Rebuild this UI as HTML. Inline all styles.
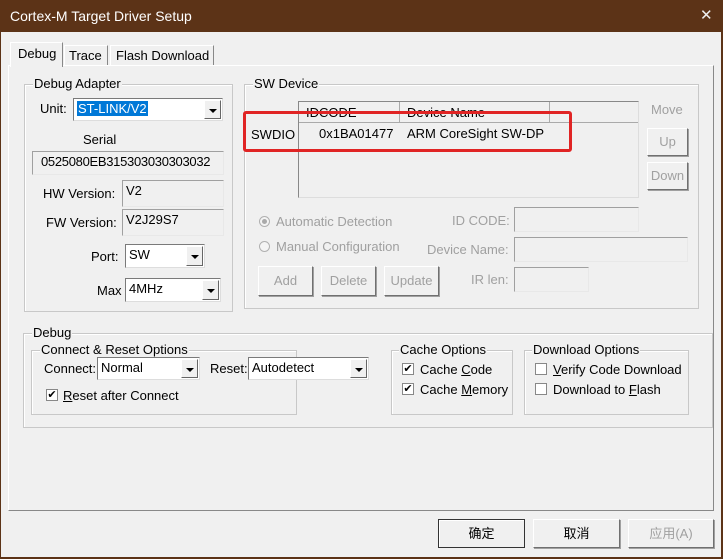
<!DOCTYPE html><html><head><meta charset="utf-8"><style>
*{box-sizing:border-box;margin:0;padding:0}
body{width:723px;height:559px;background:#5c3317;position:relative;overflow:hidden;font-family:"Liberation Sans","Noto Sans CJK SC",sans-serif;font-size:13px;color:#000}
.a{position:absolute;white-space:nowrap}
#win{position:absolute;left:1px;top:32px;width:720px;height:525px;background:#f0f0f0}
.grp{position:absolute;border:1px solid #c8c8c8;box-shadow:inset 1px 1px 0 #fff}
.gt{position:absolute;top:-9px;left:8px;background:#f0f0f0;padding:0 1px;line-height:16px}
.sunk{position:absolute;border:1px solid #a0a0a0;border-right-color:#e8e8e8;border-bottom-color:#e8e8e8;background:#f0f0f0;padding-left:3px;line-height:20px}
.combo{position:absolute;background:#fff;border:1px solid #7a7a7a;border-right-color:#ddd;border-bottom-color:#ddd;line-height:20px;padding-left:3px}
.combo .dd{position:absolute;right:1px;top:1px;bottom:1px;width:17px;background:#f0f0f0;border:1px solid #fff;border-right-color:#666;border-bottom-color:#666}
.combo .dd:after{content:"";position:absolute;left:4px;top:8px;border-left:4px solid transparent;border-right:4px solid transparent;border-top:4px solid #000}
.btn{position:absolute;background:#f0f0f0;border:1px solid #fff;border-right-color:#707070;border-bottom-color:#707070;box-shadow:1px 1px 0 #a0a0a0;text-align:center}
.dis{color:#a0a0a0}
.cb{position:absolute;width:12px;height:12px;background:#fff;border:1px solid #888;font-size:11px;line-height:10px;text-align:center}
.rd{position:absolute;width:11px;height:11px;border-radius:50%;border:1px solid #b0b0b0;background:#f4f4f4}
</style></head><body>
<div class="a" style="left:10px;top:8px;color:#fff;font-size:14px">Cortex-M Target Driver Setup</div>
<div class="a" style="left:700px;top:6px;color:#eee;font-size:15px">✕</div>
<div id="win"></div>
<div class="a" style="left:8px;top:65px;width:706px;height:446px;border:1px solid #fff;border-right-color:#888;border-bottom-color:#888"></div>
<div class="a" style="left:10px;top:42px;width:53px;height:25px;background:#f0f0f0;border:1px solid #fff;border-bottom:none;border-right-color:#888;padding:3px 0 0 7px">Debug</div>
<div class="a" style="left:64px;top:45px;width:44px;height:20px;border:1px solid #fff;border-bottom:none;border-right-color:#888;padding:2px 0 0 4px">Trace</div>
<div class="a" style="left:110px;top:45px;width:104px;height:20px;border:1px solid #fff;border-bottom:none;border-right-color:#888;padding:2px 0 0 5px">Flash Download</div>
<div class="grp" style="left:24px;top:84px;width:209px;height:228px"><div class="gt">Debug Adapter</div></div>
<div class="a" style="left:40px;top:101px">Unit:</div>
<div class="combo" style="left:73px;top:98px;width:150px;height:23px"><span style="background:#0078d7;color:#fff;padding:0 1px">ST-LINK/V2</span><div class="dd"></div></div>
<div class="a" style="left:83px;top:132px">Serial</div>
<div class="sunk" style="left:32px;top:151px;width:192px;height:24px;padding-left:8px;letter-spacing:-0.3px">0525080EB315303030303032</div>
<div class="a" style="left:43px;top:186px">HW Version:</div>
<div class="sunk" style="left:122px;top:180px;width:102px;height:27px">V2</div>
<div class="a" style="left:46px;top:215px">FW Version:</div>
<div class="sunk" style="left:122px;top:209px;width:102px;height:27px">V2J29S7</div>
<div class="a" style="left:91px;top:249px">Port:</div>
<div class="combo" style="left:125px;top:244px;width:80px;height:24px">SW<div class="dd"></div></div>
<div class="a" style="left:97px;top:283px">Max</div>
<div class="combo" style="left:125px;top:278px;width:96px;height:24px">4MHz<div class="dd"></div></div>
<div class="grp" style="left:244px;top:84px;width:455px;height:225px"><div class="gt">SW Device</div></div>
<div class="a" style="left:298px;top:101px;width:341px;height:97px;border:1px solid #888;border-right-color:#ddd;border-bottom-color:#ddd;background:#f0f0f0"></div>
<div class="a" style="left:299px;top:102px;width:101px;height:21px;border-right:1px solid #aaa;border-bottom:1px solid #aaa;padding:3px 0 0 7px">IDCODE</div>
<div class="a" style="left:400px;top:102px;width:150px;height:21px;border-right:1px solid #aaa;border-bottom:1px solid #aaa;padding:3px 0 0 7px">Device Name</div>
<div class="a" style="left:550px;top:102px;width:88px;height:21px;border-bottom:1px solid #aaa"></div>
<div class="a" style="left:251px;top:127px">SWDIO</div>
<div class="a" style="left:319px;top:126px">0x1BA01477</div>
<div class="a" style="left:407px;top:126px">ARM CoreSight SW-DP</div>
<div class="a" style="left:243px;top:111px;width:329px;height:41px;border:3px solid #e02424;border-radius:3px"></div>
<div class="a dis" style="left:651px;top:102px">Move</div>
<div class="btn dis" style="left:647px;top:128px;width:41px;height:28px;line-height:26px">Up</div>
<div class="btn dis" style="left:647px;top:162px;width:41px;height:28px;line-height:26px">Down</div>
<div class="rd" style="left:259px;top:216px"></div><div class="a" style="left:262px;top:219px;width:5px;height:5px;border-radius:50%;background:#aaa"></div>
<div class="a dis" style="left:276px;top:214px">Automatic Detection</div>
<div class="rd" style="left:259px;top:241px"></div>
<div class="a dis" style="left:276px;top:239px">Manual Configuration</div>
<div class="a dis" style="left:452px;top:213px">ID CODE:</div>
<div class="sunk" style="left:514px;top:207px;width:125px;height:25px"></div>
<div class="a dis" style="left:427px;top:242px">Device Name:</div>
<div class="sunk" style="left:514px;top:237px;width:174px;height:25px"></div>
<div class="a dis" style="left:471px;top:272px">IR len:</div>
<div class="sunk" style="left:514px;top:267px;width:75px;height:25px"></div>
<div class="btn dis" style="left:258px;top:266px;width:55px;height:30px;line-height:28px">Add</div>
<div class="btn dis" style="left:321px;top:266px;width:55px;height:30px;line-height:28px">Delete</div>
<div class="btn dis" style="left:384px;top:266px;width:55px;height:30px;line-height:28px">Update</div>
<div class="grp" style="left:23px;top:333px;width:690px;height:95px"><div class="gt" style="left:8px">Debug</div></div>
<div class="grp" style="left:31px;top:350px;width:266px;height:65px"><div class="gt">Connect &amp; Reset Options</div></div>
<div class="a" style="left:44px;top:361px">Connect:</div>
<div class="combo" style="left:97px;top:357px;width:103px;height:23px">Normal<div class="dd"></div></div>
<div class="a" style="left:210px;top:361px">Reset:</div>
<div class="combo" style="left:248px;top:357px;width:121px;height:23px">Autodetect<div class="dd"></div></div>
<div class="cb" style="left:46px;top:389px">✔</div>
<div class="a" style="left:63px;top:388px"><u>R</u>eset after Connect</div>
<div class="grp" style="left:391px;top:350px;width:122px;height:65px"><div class="gt" style="left:7px">Cache Options</div></div>
<div class="cb" style="left:402px;top:363px">✔</div><div class="a" style="left:420px;top:362px">Cache <u>C</u>ode</div>
<div class="cb" style="left:402px;top:383px">✔</div><div class="a" style="left:420px;top:382px">Cache <u>M</u>emory</div>
<div class="grp" style="left:524px;top:350px;width:165px;height:65px"><div class="gt" style="left:7px">Download Options</div></div>
<div class="cb" style="left:535px;top:363px"></div><div class="a" style="left:553px;top:362px"><u>V</u>erify Code Download</div>
<div class="cb" style="left:535px;top:383px"></div><div class="a" style="left:553px;top:382px">Download to <u>F</u>lash</div>
<div class="btn" style="left:438px;top:519px;width:87px;height:29px;line-height:27px;border:1px solid #333;box-shadow:inset 1px 1px 0 #fff">确定</div>
<div class="btn" style="left:533px;top:519px;width:87px;height:29px;line-height:27px">取消</div>
<div class="btn dis" style="left:628px;top:519px;width:86px;height:29px;line-height:27px">应用(A)</div>
</body></html>
